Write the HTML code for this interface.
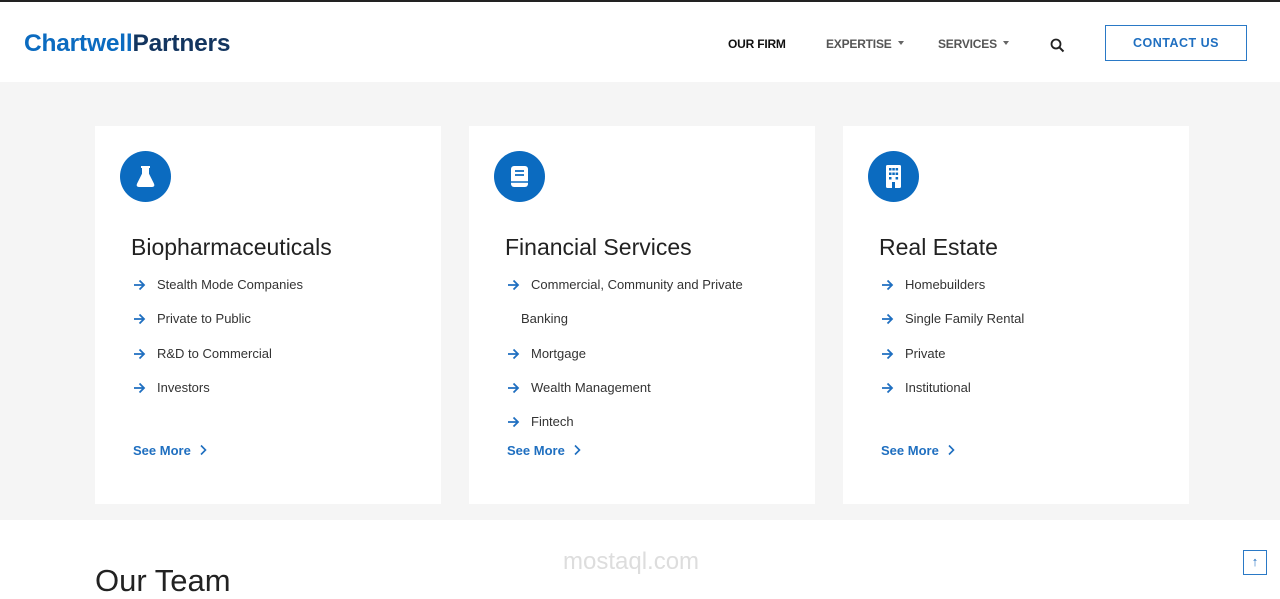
<!DOCTYPE html>
<html><head><meta charset="utf-8"><style>
*{margin:0;padding:0;box-sizing:border-box}
body{width:1280px;height:588px;overflow:hidden;background:#fff;font-family:"Liberation Sans",sans-serif;position:relative}
.top{position:absolute;left:0;top:0;width:1280px;height:2px;background:#222}
.hdr{position:absolute;left:0;top:2px;width:1280px;height:80px;background:#fff}
.logo{position:absolute;left:24px;top:28px;font-size:24.5px;font-weight:bold;letter-spacing:-0.2px}
.logo .a{color:#0b6bc0}.logo .b{color:#13355f}
.nav{position:absolute;top:35px;font-size:12px;font-weight:bold;color:#555;letter-spacing:-0.2px}
.car{display:inline-block;width:0;height:0;border-left:3.5px solid transparent;border-right:3.5px solid transparent;border-top:4px solid #666;vertical-align:middle;margin-left:6px;margin-top:-3px}
.btn{position:absolute;left:1105px;top:23px;width:142px;height:36px;border:1px solid #2a79c6;color:#1f6fc0;font-size:12.5px;font-weight:bold;text-align:center;line-height:35px;letter-spacing:.5px}
.gray{position:absolute;left:0;top:82px;width:1280px;height:438px;background:#f5f5f5}
.card{position:absolute;top:126px;width:346px;height:378px;background:#fff}
.ic{position:absolute;left:25px;top:25px;width:51px;height:51px;border-radius:50%;background:#0b6bc0}
.ic svg{position:absolute;left:13px;top:13px}
h2{position:absolute;left:36px;top:108px;font-size:23px;font-weight:normal;color:#222}
ul{position:absolute;left:38px;top:150px;list-style:none}
li{font-size:13px;color:#333;height:34.3px;line-height:17px;position:relative;padding-left:24px}
li.c{padding-left:14px}
li svg{position:absolute;left:0;top:3px}
.sm{position:absolute;left:38px;top:317px;font-size:13px;font-weight:bold;color:#1f6fc0}
.sm svg{margin-left:8px;vertical-align:-1px}
.team{position:absolute;left:95px;top:563px;font-size:31px;color:#222}
.wm{position:absolute;left:563px;top:548px;font-size:24px;color:#ddd}
.up{position:absolute;left:1243px;top:550px;width:24px;height:25px;border:1px solid #2a79c6;color:#1f6fc0;font-size:13px;text-align:center;line-height:22px;background:#fff}
</style></head><body>
<svg width="0" height="0" style="position:absolute"><defs><symbol id="ar" viewBox="0 0 13 12"><path d="M1 6h10M6.5 1.5L11 6l-4.5 4.5" fill="none" stroke="#1f6fc0" stroke-width="1.8"/></symbol><symbol id="ch" viewBox="0 0 8 12"><path d="M2 1.5L6.5 6 2 10.5" fill="none" stroke="#1f6fc0" stroke-width="1.6"/></symbol></defs></svg>
<div class="top"></div>
<div class="hdr">
<div class="logo"><span class="a">Chartwell</span><span class="b">Partners</span></div>
<div class="nav" style="left:728px;color:#111">OUR FIRM</div>
<div class="nav" style="left:826px">EXPERTISE<span class="car"></span></div>
<div class="nav" style="left:938px">SERVICES<span class="car"></span></div>
<svg style="position:absolute;left:1050px;top:36px" width="15" height="15" viewBox="0 0 15 15"><circle cx="6" cy="6" r="4.5" fill="none" stroke="#222" stroke-width="1.8"/><path d="M9.3 9.3L13.5 13.5" stroke="#222" stroke-width="2"/></svg>
<div class="btn">CONTACT US</div>
</div>
<div class="gray"></div>

<div class="card" style="left:95px">
<div class="ic"><svg width="25" height="25" viewBox="0 0 25 25"><path d="M8 3h9M10 3v7L5 20q-1 2 1 2h13q2 0 1-2l-5-10V3" fill="#fff" stroke="#fff" stroke-width="2" stroke-linejoin="round"/></svg></div>
<h2>Biopharmaceuticals</h2>
<ul><li><svg width="13" height="12"><use href="#ar"/></svg>Stealth Mode Companies</li><li><svg width="13" height="12"><use href="#ar"/></svg>Private to Public</li><li><svg width="13" height="12"><use href="#ar"/></svg>R&amp;D to Commercial</li><li><svg width="13" height="12"><use href="#ar"/></svg>Investors</li></ul>
<div class="sm">See More<svg width="8" height="12"><use href="#ch"/></svg></div>
</div>

<div class="card" style="left:469px">
<div class="ic"><svg width="25" height="25" viewBox="0 0 25 25"><rect x="4" y="2" width="17" height="21" rx="3" fill="#fff"/><path d="M8 7h9M8 11h9" stroke="#0b6bc0" stroke-width="1.8"/><path d="M4 18h17" stroke="#0b6bc0" stroke-width="1.5"/></svg></div>
<h2>Financial Services</h2>
<ul><li><svg width="13" height="12"><use href="#ar"/></svg>Commercial, Community and Private</li><li class="c">Banking</li><li><svg width="13" height="12"><use href="#ar"/></svg>Mortgage</li><li><svg width="13" height="12"><use href="#ar"/></svg>Wealth Management</li><li><svg width="13" height="12"><use href="#ar"/></svg>Fintech</li></ul>
<div class="sm">See More<svg width="8" height="12"><use href="#ch"/></svg></div>
</div>

<div class="card" style="left:843px">
<div class="ic"><svg width="25" height="25" viewBox="0 0 25 25"><rect x="5" y="1" width="15" height="23" rx="1.5" fill="#fff"/><g fill="#0b6bc0"><rect x="8" y="4" width="2.5" height="2.5"/><rect x="11.3" y="4" width="2.5" height="2.5"/><rect x="14.6" y="4" width="2.5" height="2.5"/><rect x="8" y="8.5" width="2.5" height="2.5"/><rect x="11.3" y="8.5" width="2.5" height="2.5"/><rect x="14.6" y="8.5" width="2.5" height="2.5"/><rect x="8" y="13" width="2.5" height="2.5"/><rect x="14.6" y="13" width="2.5" height="2.5"/><rect x="11" y="18" width="3" height="6"/></g></svg></div>
<h2>Real Estate</h2>
<ul><li><svg width="13" height="12"><use href="#ar"/></svg>Homebuilders</li><li><svg width="13" height="12"><use href="#ar"/></svg>Single Family Rental</li><li><svg width="13" height="12"><use href="#ar"/></svg>Private</li><li><svg width="13" height="12"><use href="#ar"/></svg>Institutional</li></ul>
<div class="sm">See More<svg width="8" height="12"><use href="#ch"/></svg></div>
</div>

<div class="team">Our Team</div>
<div class="wm">mostaql.com</div>
<div class="up">↑</div>
</body></html>
